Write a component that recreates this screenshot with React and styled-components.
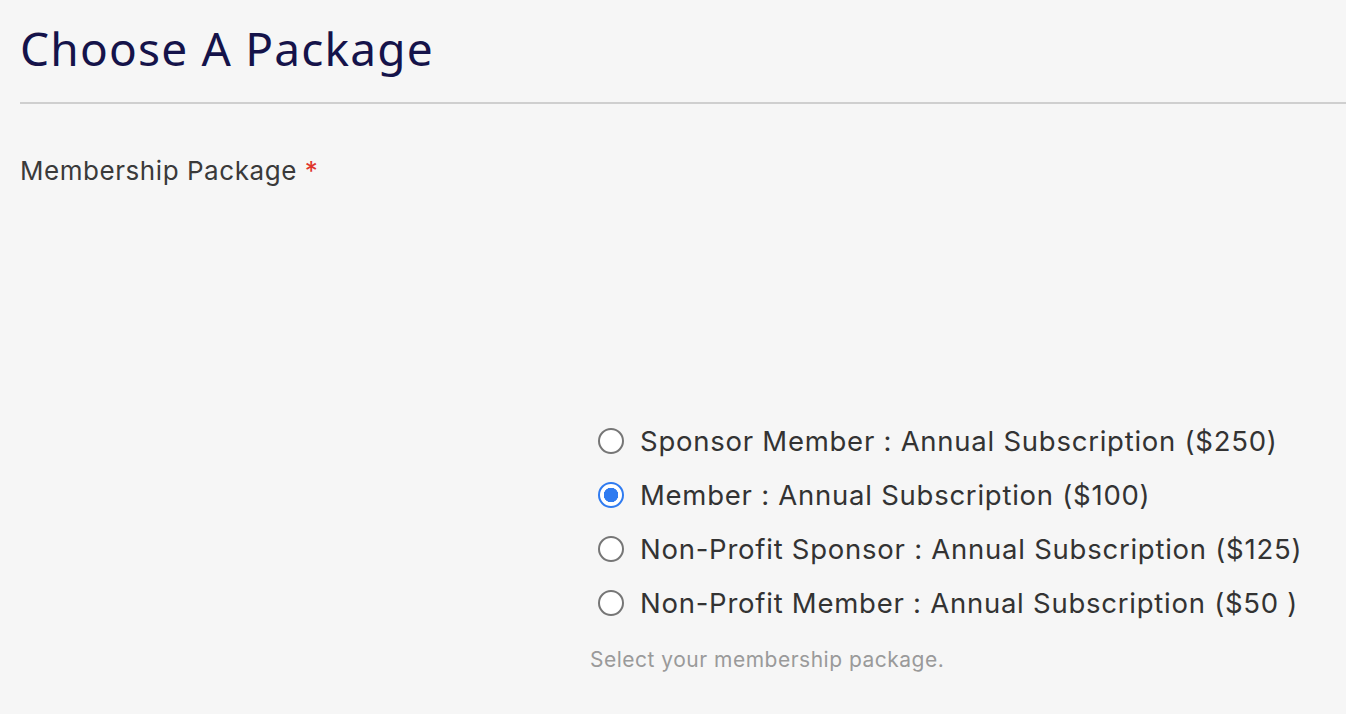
import React, { useState } from "react";
import styled, { createGlobalStyle } from "styled-components";

const Global = createGlobalStyle`
  html, body { margin: 0; padding: 0; background: #f6f6f6; }
  body { font-family: Inter, "Noto Sans", "Liberation Sans", sans-serif; }
`;

const Page = styled.div`
  padding: 0 0 0 20px;
  min-height: 714px;
  box-sizing: border-box;
`;

const Title = styled.h1`
  margin: 0;
  padding-top: 18px;
  height: 104px;
  box-sizing: border-box;
  font-family: "Noto Sans", "Open Sans", sans-serif;
  font-weight: 400;
  font-size: 46px;
  line-height: 60px;
  color: #15134a;
  letter-spacing: 1.2px;
  border-bottom: 2px solid #cfcfcf;
`;

const Field = styled.div`
  display: grid;
  grid-template-columns: 570px 1fr;
  padding-top: 49px;
`;

const Label = styled.div`
  grid-column: 1 / -1;
  font-size: 26px;
  line-height: 36px;
  letter-spacing: 0.55px;
  color: #3a3a3a;
`;

const Required = styled.span`
  color: #e0352b;
  margin-left: 8px;
`;

const Options = styled.div`
  grid-column: 2;
  padding-top: 225px;
  display: flex;
  flex-direction: column;
`;

const Option = styled.label`
  display: flex;
  align-items: center;
  gap: 16px;
  height: 54px;
  padding-left: 8px;
  font-size: 27.5px;
  letter-spacing: 0.75px;
  color: #333;
  cursor: pointer;
`;

const Radio = styled.input`
  appearance: none;
  margin: 0;
  width: 26px;
  height: 26px;
  border-radius: 50%;
  border: 2px solid #767676;
  background: #fff;
  box-sizing: border-box;
  flex: none;
  &:checked {
    border-color: #2f7bf0;
    background: radial-gradient(circle, #2f7bf0 0 7px, #fff 7.5px);
  }
`;

const Help = styled.div`
  font-size: 21px;
  letter-spacing: 0.5px;
  color: #9a9a9a;
  margin-top: 17px;
`;

const packages = [
  "Sponsor Member : Annual Subscription ($250)",
  "Member : Annual Subscription ($100)",
  "Non-Profit Sponsor : Annual Subscription ($125)",
  "Non-Profit Member : Annual Subscription ($50 )",
];

export default function App() {
  const [sel, setSel] = useState(1);
  return (
    <Page>
      <Global />
      <Title>Choose A Package</Title>
      <Field>
        <Label>
          Membership Package<Required>*</Required>
        </Label>
        <Options>
          {packages.map((p, i) => (
            <Option key={p}>
              <Radio
                type="radio"
                name="pkg"
                checked={sel === i}
                onChange={() => setSel(i)}
              />
              {p}
            </Option>
          ))}
          <Help>Select your membership package.</Help>
        </Options>
      </Field>
    </Page>
  );
}
